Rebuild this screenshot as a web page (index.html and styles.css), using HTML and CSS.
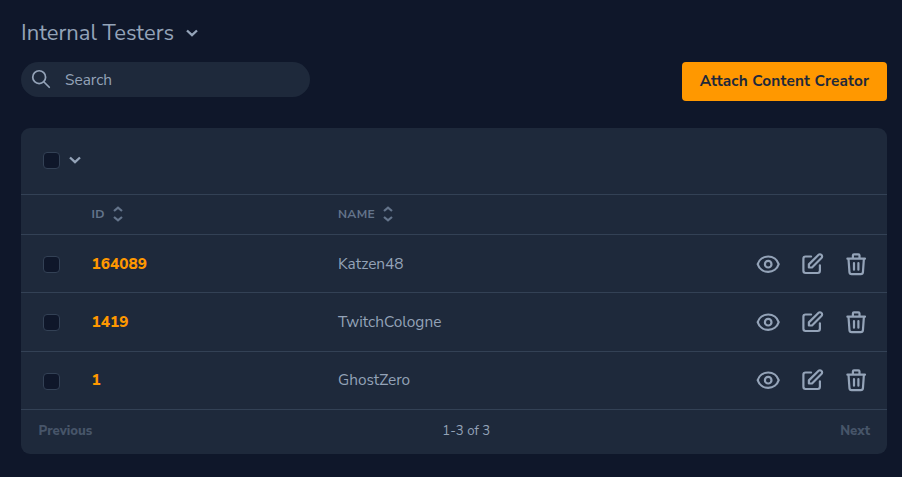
FILE: index.html
```html
<!DOCTYPE html>
<html lang="en">
<head>
<meta charset="utf-8">
<title>Internal Testers</title>
<link rel="stylesheet" href="styles.css">
</head>
<body>
<svg class="defs" width="0" height="0" aria-hidden="true">
  <symbol id="chevron" viewBox="0 0 12 8"><path d="M1 1.500 6 6.200l5-4.700"/></symbol>
  <symbol id="sort" viewBox="0 0 10 16"><path d="M1 5 5 1.600l4 3.400M1 11 5 14.400l4-3.400"/></symbol>
  <symbol id="search" viewBox="0 0 24 24"><path d="M21 21l-6-6m2-5a7 7 0 11-14 0 7 7 0 0114 0z"/></symbol>
  <symbol id="eye" viewBox="0 0 24 24"><path d="M15 12a3 3 0 11-6 0 3 3 0 016 0z"/><path d="M2.458 12C3.732 7.943 7.523 5 12 5c4.478 0 8.268 2.943 9.542 7-1.274 4.057-5.064 7-9.542 7-4.477 0-8.268-2.943-9.542-7z"/></symbol>
  <symbol id="edit" viewBox="0 0 24 24"><path d="M11 5H6a2 2 0 00-2 2v11a2 2 0 002 2h11a2 2 0 002-2v-5m-1.414-9.414a2 2 0 112.828 2.828L11.828 15H9v-2.828l8.586-8.586z"/></symbol>
  <symbol id="trash" viewBox="0 0 24 24"><path d="M19 7l-.867 12.142A2 2 0 0116.138 21H7.862a2 2 0 01-1.995-1.858L5 7m5 4v6m4-6v6m1-10V4a1 1 0 00-1-1h-4a1 1 0 00-1 1v3M4 7h16"/></symbol>
</svg>
<main class="page">
  <h1 class="title"><span>Internal Testers</span><svg class="icon chevron"><use href="#chevron"/></svg></h1>
  <div class="controls">
    <div class="search"><svg class="icon search-icon"><use href="#search"/></svg><span>Search</span></div>
    <button class="attach">Attach Content Creator</button>
  </div>
  <section class="card">
    <div class="toolbar"><span class="checkbox"></span><svg class="icon chevron"><use href="#chevron"/></svg></div>
    <div class="row head">
      <span></span>
      <span class="label"><span>ID</span><svg class="icon sort"><use href="#sort"/></svg></span>
      <span class="label"><span>NAME</span><svg class="icon sort"><use href="#sort"/></svg></span>
    </div>
    <div class="row">
      <span class="checkbox"></span><span class="id">164089</span><span class="name">Katzen48</span>
      <span class="actions"><svg class="icon action"><use href="#eye"/></svg><svg class="icon action"><use href="#edit"/></svg><svg class="icon action"><use href="#trash"/></svg></span>
    </div>
    <div class="row middle">
      <span class="checkbox"></span><span class="id">1419</span><span class="name">TwitchCologne</span>
      <span class="actions"><svg class="icon action"><use href="#eye"/></svg><svg class="icon action"><use href="#edit"/></svg><svg class="icon action"><use href="#trash"/></svg></span>
    </div>
    <div class="row last">
      <span class="checkbox"></span><span class="id">1</span><span class="name">GhostZero</span>
      <span class="actions"><svg class="icon action"><use href="#eye"/></svg><svg class="icon action"><use href="#edit"/></svg><svg class="icon action"><use href="#trash"/></svg></span>
    </div>
    <div class="footer"><span class="previous">Previous</span><span class="count">1-3 of 3</span><span class="next">Next</span></div>
  </section>
</main>
</body>
</html>
```
FILE: styles.css
```css
* { box-sizing: border-box; }
body {
  margin: 0;
  min-height: 477px;
  background: #0f172a;
  color: #94a3b8;
  font-family: "Nunito Sans", "Nunito", "Noto Sans", sans-serif;
  font-size: 15.4px;
}
.defs { display: none; }
.page { padding: 18px 15px 0 21px; }
.icon {
  flex: none;
  fill: none;
  stroke: #94a3b8;
  stroke-width: 2;
  stroke-linecap: round;
  stroke-linejoin: round;
}
.chevron { width: 12px; height: 8px; stroke-width: 2.3; stroke-linecap: butt; stroke-linejoin: miter; }
.title {
  display: flex;
  align-items: center;
  gap: 11.5px;
  height: 30px;
  margin: 0;
  font-size: 22px;
  font-weight: 400;
}
.controls {
  display: flex;
  align-items: flex-start;
  justify-content: space-between;
  height: 80px;
  padding-top: 14px;
}
.search {
  display: flex;
  align-items: center;
  gap: 13px;
  width: 289px;
  height: 35px;
  padding: 0 0 1px 9px;
  border-radius: 18px;
  background: #1e293b;
}
.search-icon { width: 22px; height: 22px; stroke-width: 1.9; }
.attach {
  width: 205px;
  height: 39px;
  padding: 0 0 2px;
  border: 0;
  border-radius: 4px;
  background: #ff9800;
  color: #1e293b;
  font-family: inherit;
  font-size: 15.4px;
  font-weight: 700;
  letter-spacing: 0.15px;
  white-space: nowrap;
}
.card {
  height: 326px;
  border-radius: 9px;
  background: #1e293b;
}
.toolbar {
  display: flex;
  align-items: center;
  gap: 8.5px;
  height: 66px;
  padding: 0 0 2px 22px;
}
.checkbox {
  width: 17px;
  height: 17px;
  border: 1px solid #334155;
  border-radius: 4px;
  background: #0f172a;
}
.row {
  display: grid;
  grid-template-columns: 48.5px 246.5px 1fr auto;
  align-items: center;
  height: 58px;
  padding: 0 18px 0 22px;
  border-top: 1px solid #334155;
}
.row.head { height: 40px; }
.row.middle { height: 59px; padding-bottom: 1px; }
.row.last { padding-bottom: 2px; }
.row .checkbox { margin-top: 2px; }
.row.last .checkbox { margin-top: 3px; }
.label {
  display: flex;
  align-items: center;
  gap: 8.5px;
  padding-bottom: 2px;
  color: #64748b;
  font-size: 12.1px;
  font-weight: 700;
  letter-spacing: 0.3px;
}
.sort { width: 10px; height: 16px; margin-top: 1px; stroke: #64748b; stroke-width: 2.2; stroke-linecap: butt; stroke-linejoin: miter; }
.id { color: #ff9800; font-weight: 800; }
.actions { display: flex; gap: 17.6px; padding-top: 1px; }
.action { width: 26.4px; height: 26.4px; }
.footer {
  display: flex;
  align-items: center;
  justify-content: space-between;
  height: 45px;
  padding: 0 17px 3px 17.600px;
  border-top: 1px solid #334155;
  font-size: 13.2px;
}
.previous, .next { color: #475569; font-weight: 800; }
```
